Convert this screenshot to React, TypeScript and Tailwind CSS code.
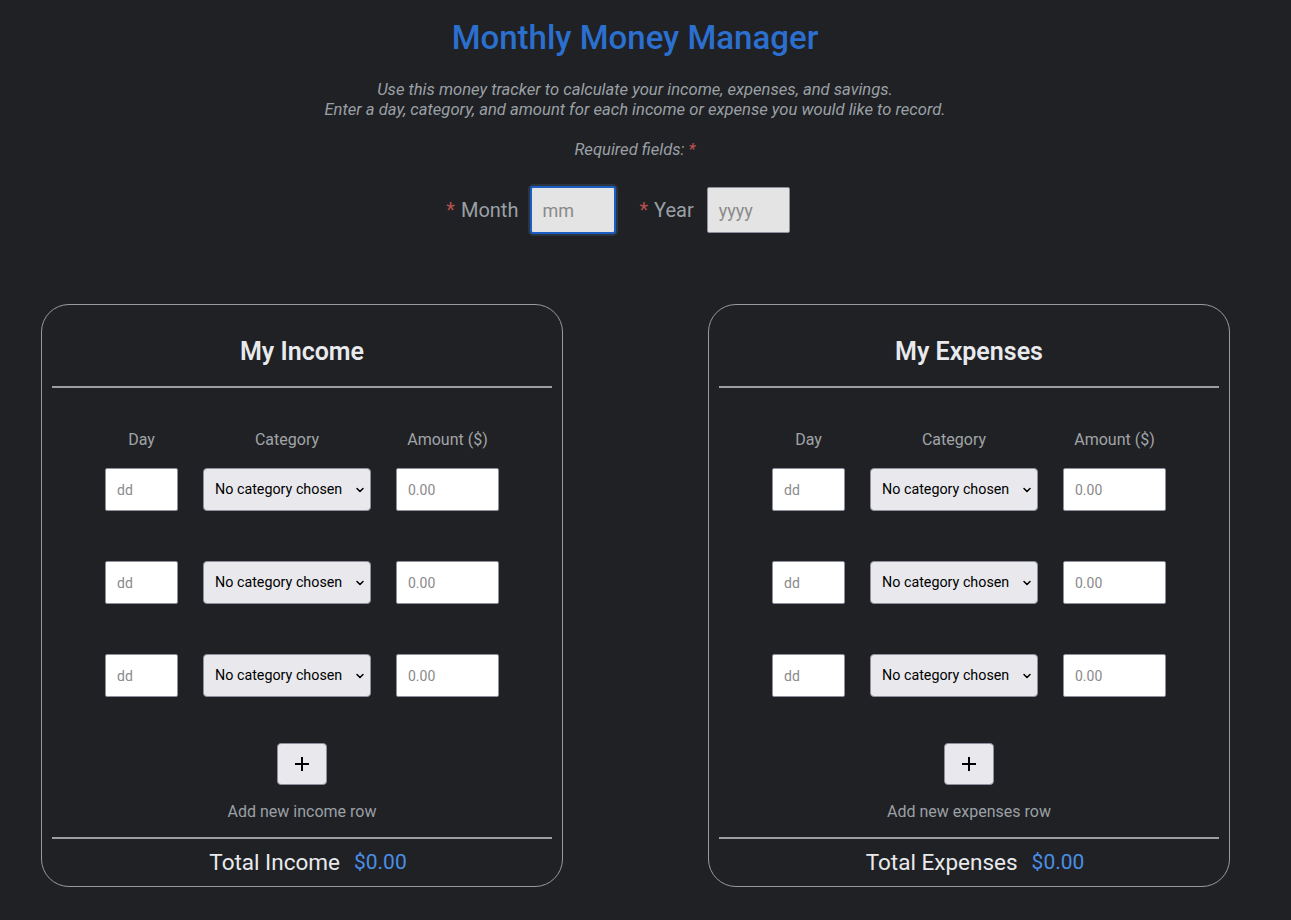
import { ChevronDown } from "lucide-react";

const font = { fontFamily: "Roboto, 'Noto Sans', sans-serif" };

function EntryRow() {
	return (
		<div className="flex items-center gap-[25px]">
			<input
				placeholder="dd"
				className="w-[73px] h-[43px] bg-white border border-[#8f8f9d] rounded-[2px] pl-[11px] text-[14px] text-black placeholder:text-[#8a8a8a] outline-none"
			/>
			<div className="relative">
				<select className="appearance-none w-[168px] h-[43px] bg-[#e9e9ed] border border-[#8f8f9d] rounded-[4px] pl-[11px] text-[14.3px] text-black outline-none">
					<option>No category chosen</option>
				</select>
				<ChevronDown
					size={12}
					strokeWidth={3}
					className="absolute right-[5px] top-[16px] text-black pointer-events-none"
				/>
			</div>
			<input
				placeholder="0.00"
				className="w-[103px] h-[43px] bg-white border border-[#8f8f9d] rounded-[2px] pl-[11px] text-[14px] text-black placeholder:text-[#8a8a8a] outline-none"
			/>
		</div>
	);
}

function Card({ title, add, total }: { title: string; add: string; total: string }) {
	return (
		<div className="w-[522px] h-[583px] border border-[#9a9a9a] rounded-[28px] flex flex-col">
			<h2 className="mt-[31px] text-center text-[25px] leading-[32px] font-semibold text-[#e8eaed]">
				{title}
			</h2>
			<div className="mx-[10px] mt-[18px] h-[2px] bg-[#9e9e9e]" />
			<div className="mt-[40px] flex flex-col items-center">
				<div className="flex items-center gap-[25px] text-[16px] leading-[24px] text-[#a0a4a8]">
					<div className="w-[73px] text-center">Day</div>
					<div className="w-[168px] text-center">Category</div>
					<div className="w-[103px] text-center">Amount ($)</div>
				</div>
				<div className="mt-[16px] flex flex-col gap-[50px]">
					<EntryRow />
					<EntryRow />
					<EntryRow />
				</div>
				<button className="mt-[46px] w-[50px] h-[42px] bg-[#e9e9ed] border border-[#8f8f9d] rounded-[4px] flex items-center justify-center text-black">
					<svg width="16" height="16" viewBox="0 0 16 16">
						<path d="M8 1v14M1 8h14" stroke="currentColor" strokeWidth="2" />
					</svg>
				</button>
				<div className="mt-[15px] text-[16px] leading-[24px] text-[#9aa0a6]">{add}</div>
			</div>
			<div className="mx-[10px] mt-[13px] h-[2px] bg-[#9e9e9e]" />
			<div className="mt-[9px] pl-[12px] flex items-center justify-center gap-[14px] leading-[28px]">
				<span className="text-[22.5px] text-[#e8eaed]">{total}</span>
				<span className="text-[21px] text-[#4a8ee6]">$0.00</span>
			</div>
		</div>
	);
}

export default function App() {
	return (
		<div className="min-h-[920px] bg-[#202124]" style={font}>
			<div className="w-[1270px] flex flex-col items-center">
				<h1 className="mt-[18px] text-[33px] leading-[40px] font-medium text-[#2b6fcf]">
					Monthly Money Manager
				</h1>
				<div className="mt-[22px] text-center italic text-[16.6px] leading-[20px] text-[#9aa0a6]">
					<p>Use this money tracker to calculate your income, expenses, and savings.</p>
					<p>Enter a day, category, and amount for each income or expense you would like to record.</p>
				</div>
				<p className="mt-[20px] italic text-[16.6px] leading-[20px] text-[#9aa0a6]">
					Required fields: <span className="text-[#c0504d]">*</span>
				</p>
				<div className="mt-[26px] pr-[34px] flex items-center text-[20px] text-[#9aa0a6]">
					<span className="text-[#b5524f] mr-[6px]">*</span>
					<span>Month</span>
					<input
						autoFocus
						placeholder="mm"
						className="ml-[12px] w-[86px] h-[48px] bg-[#e4e4e4] border-2 border-[#1a5fc4] rounded-[3px] pl-[10px] text-[18px] text-black placeholder:text-[#8a8a8a] outline-none shadow-[0_0_0_2px_#2c3440]"
					/>
					<span className="ml-[23px] text-[#b5524f] mr-[6px]">*</span>
					<span>Year</span>
					<input
						placeholder="yyyy"
						className="ml-[13px] w-[83px] h-[46px] bg-[#e4e4e4] border border-[#8f8f9d] rounded-[2px] pl-[11px] text-[18px] text-black placeholder:text-[#8a8a8a] outline-none"
					/>
				</div>
				<div className="mt-[70px] self-start ml-[41px] flex gap-[145px]">
					<Card title="My Income" add="Add new income row" total="Total Income" />
					<Card title="My Expenses" add="Add new expenses row" total="Total Expenses" />
				</div>
			</div>
		</div>
	);
}
